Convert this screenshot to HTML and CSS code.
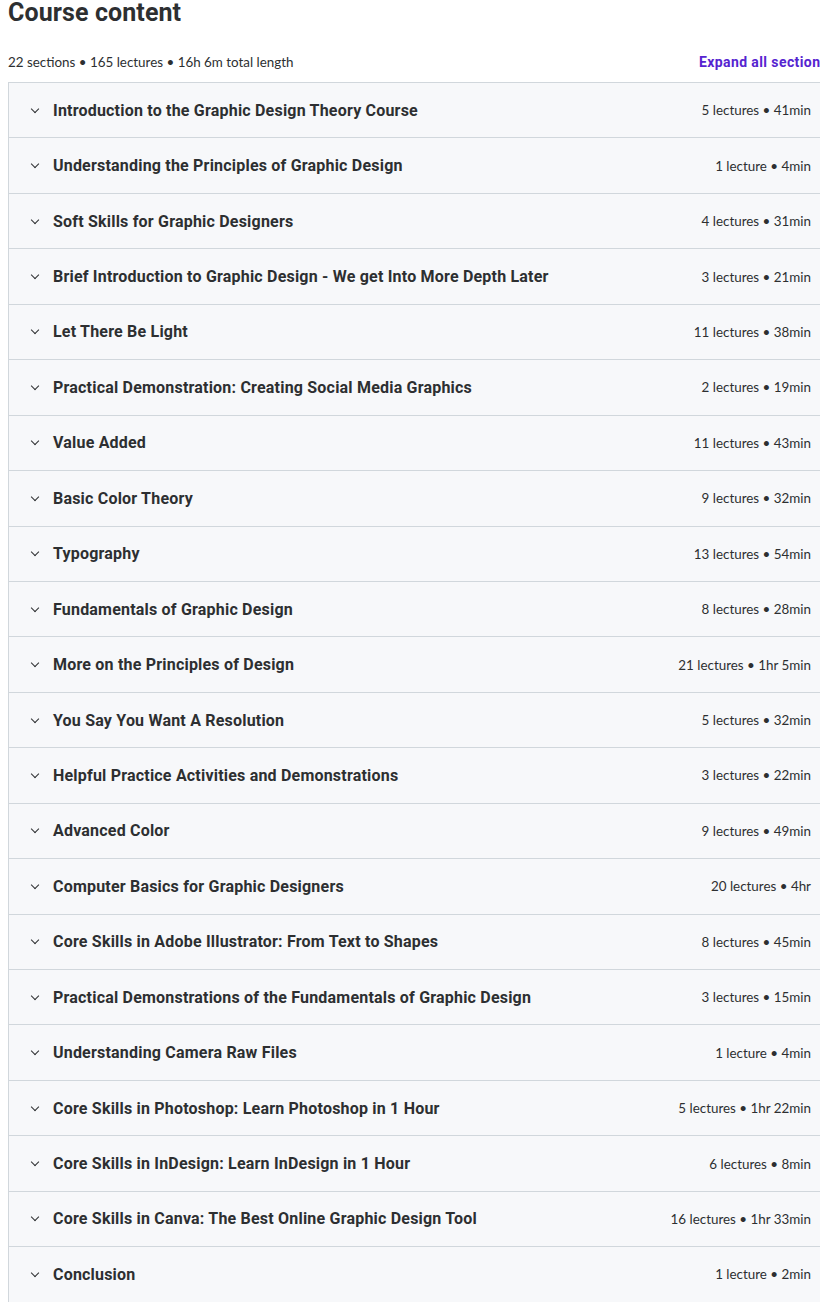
FILE: index.html
```html
<!DOCTYPE html>
<html lang="en">
<head>
  <meta charset="UTF-8" />
  <meta name="viewport" content="width=device-width, initial-scale=1.0" />
  <title>Course content</title>
  <link rel="stylesheet" href="styles.css">
</head>
<body>
  <div class="page">
    <h2 class="title">Course content</h2>
    <div class="summary">
      <span>22 sections • 165 lectures • 16h 6m total length</span>
      <button class="expand">Expand all sections</button>
    </div>

    <div class="sections">
      <div class="section"><span class="chev"></span><span class="name">Introduction to the Graphic Design Theory Course</span><span class="meta">5 lectures • 41min</span></div>
      <div class="section"><span class="chev"></span><span class="name">Understanding the Principles of Graphic Design</span><span class="meta">1 lecture • 4min</span></div>
      <div class="section"><span class="chev"></span><span class="name">Soft Skills for Graphic Designers</span><span class="meta">4 lectures • 31min</span></div>
      <div class="section"><span class="chev"></span><span class="name">Brief Introduction to Graphic Design - We get Into More Depth Later</span><span class="meta">3 lectures • 21min</span></div>
      <div class="section"><span class="chev"></span><span class="name">Let There Be Light</span><span class="meta">11 lectures • 38min</span></div>
      <div class="section"><span class="chev"></span><span class="name">Practical Demonstration: Creating Social Media Graphics</span><span class="meta">2 lectures • 19min</span></div>
      <div class="section"><span class="chev"></span><span class="name">Value Added</span><span class="meta">11 lectures • 43min</span></div>
      <div class="section"><span class="chev"></span><span class="name">Basic Color Theory</span><span class="meta">9 lectures • 32min</span></div>
      <div class="section"><span class="chev"></span><span class="name">Typography</span><span class="meta">13 lectures • 54min</span></div>
      <div class="section"><span class="chev"></span><span class="name">Fundamentals of Graphic Design</span><span class="meta">8 lectures • 28min</span></div>
      <div class="section"><span class="chev"></span><span class="name">More on the Principles of Design</span><span class="meta">21 lectures • 1hr 5min</span></div>
      <div class="section"><span class="chev"></span><span class="name">You Say You Want A Resolution</span><span class="meta">5 lectures • 32min</span></div>
      <div class="section"><span class="chev"></span><span class="name">Helpful Practice Activities and Demonstrations</span><span class="meta">3 lectures • 22min</span></div>
      <div class="section"><span class="chev"></span><span class="name">Advanced Color</span><span class="meta">9 lectures • 49min</span></div>
      <div class="section"><span class="chev"></span><span class="name">Computer Basics for Graphic Designers</span><span class="meta">20 lectures • 4hr</span></div>
      <div class="section"><span class="chev"></span><span class="name">Core Skills in Adobe Illustrator: From Text to Shapes</span><span class="meta">8 lectures • 45min</span></div>
      <div class="section"><span class="chev"></span><span class="name">Practical Demonstrations of the Fundamentals of Graphic Design</span><span class="meta">3 lectures • 15min</span></div>
      <div class="section"><span class="chev"></span><span class="name">Understanding Camera Raw Files</span><span class="meta">1 lecture • 4min</span></div>
      <div class="section"><span class="chev"></span><span class="name">Core Skills in Photoshop: Learn Photoshop in 1 Hour</span><span class="meta">5 lectures • 1hr 22min</span></div>
      <div class="section"><span class="chev"></span><span class="name">Core Skills in InDesign: Learn InDesign in 1 Hour</span><span class="meta">6 lectures • 8min</span></div>
      <div class="section"><span class="chev"></span><span class="name">Core Skills in Canva: The Best Online Graphic Design Tool</span><span class="meta">16 lectures • 1hr 33min</span></div>
      <div class="section"><span class="chev"></span><span class="name">Conclusion</span><span class="meta">1 lecture • 2min</span></div>
    </div>
  </div>
</body>
</html>
```

FILE: styles.css
```css
html, body {
  margin: 0;
  background: white;
  overflow: hidden;
}
body {
  font-family: Lato, "Liberation Sans", sans-serif;
  color: #2d2f31;
}
.page {
  width: 820px;
  padding: 0 0 0 8px;
}
.title {
  margin: 0;
  font-family: Roboto, "Liberation Sans", sans-serif;
  font-size: 25px;
  line-height: 26px;
  font-weight: 700;
  letter-spacing: 0.1px;
}
.summary {
  display: flex;
  justify-content: space-between;
  align-items: center;
  height: 40px;
  margin-top: 16px;
  font-size: 13.4px;
}
.expand {
  background: none;
  border: none;
  padding: 0;
  font-family: Roboto, "Liberation Sans", sans-serif;
  font-size: 14px;
  font-weight: 700;
  letter-spacing: 0.4px;
  color: #5624d0;
}
.sections {
  border: 1px solid #d1d7dc;
  border-bottom: none;
}
.section {
  box-sizing: border-box;
  height: 55.45px;
  display: flex;
  align-items: center;
  padding: 0 16px 0 22px;
  background: #f7f8fa;
  border-bottom: 1px solid #d1d7dc;
}
.chev {
  width: 5px;
  height: 5px;
  border-right: 1.2px solid #2d2f31;
  border-bottom: 1.2px solid #2d2f31;
  transform: rotate(45deg);
  margin: -3px 15px 0 1px;
}
.name {
  flex: 1;
  font-family: Roboto, "Liberation Sans", sans-serif;
  font-size: 16px;
  font-weight: 700;
  letter-spacing: 0.2px;
}
.meta {
  font-size: 13.4px;
}
```
